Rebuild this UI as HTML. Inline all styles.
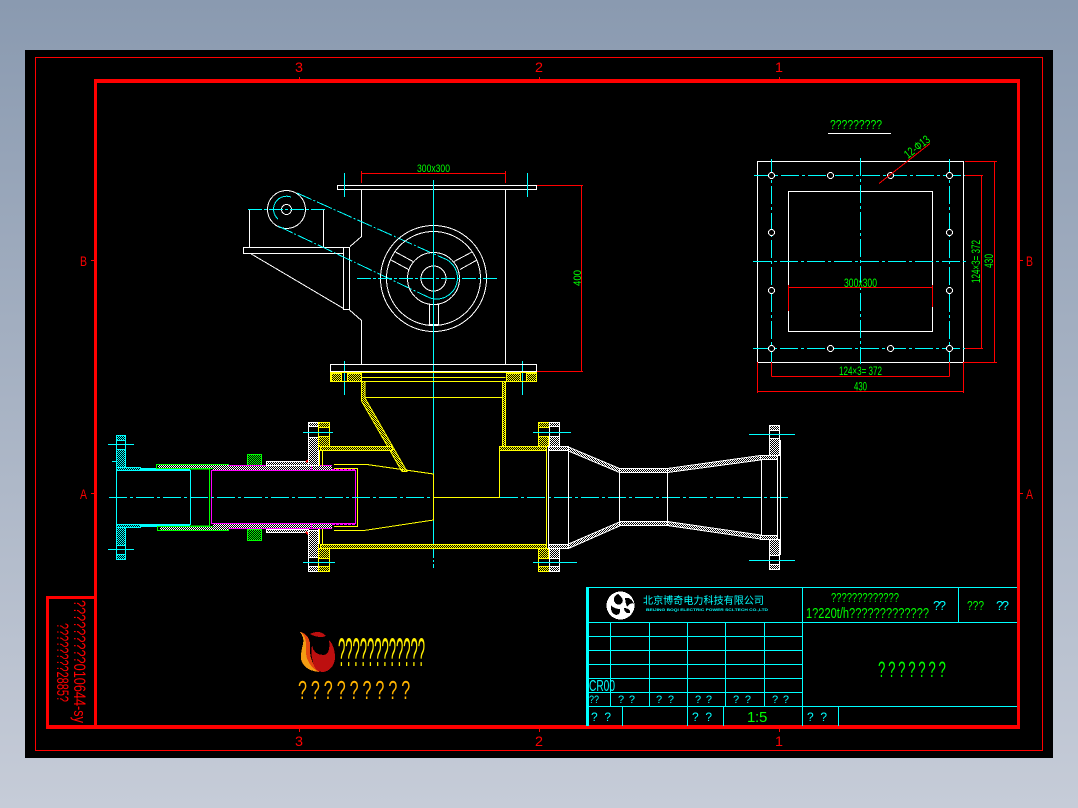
<!DOCTYPE html>
<html>
<head>
<meta charset="utf-8">
<style>
html,body{margin:0;padding:0;width:1078px;height:808px;overflow:hidden;background:linear-gradient(180deg,#8a9ab0 0%,#c6ccd8 100%)}
svg{position:absolute;left:0;top:0;display:block}
.s{shape-rendering:crispEdges;fill:none;stroke-width:1}
text{font-family:"Liberation Sans","Noto Sans CJK SC",sans-serif;text-anchor:start}
.w{stroke:#fff}.y{stroke:#ff0}.c{stroke:#0ff}.r{stroke:#f00}.g{stroke:#0f0}.m{stroke:#f0f}
.d{stroke-dasharray:14 2 3 2}
.gt{fill:#0f0}.ct{fill:#0ff}.rt{fill:#f00}
</style>
</head>
<body>
<svg width="1078" height="808" viewBox="0 0 1078 808" xmlns="http://www.w3.org/2000/svg">
<defs>
<pattern id="hw" width="2" height="2" patternUnits="userSpaceOnUse"><rect width="2" height="2" fill="#000"/><rect width="1" height="1" fill="#fff"/><rect x="1" y="1" width="1" height="1" fill="#fff"/></pattern>
<pattern id="hy" width="2" height="2" patternUnits="userSpaceOnUse"><rect width="2" height="2" fill="#000"/><rect width="1" height="1" fill="#ff0"/><rect x="1" y="1" width="1" height="1" fill="#ff0"/></pattern>
<pattern id="hc" width="2" height="2" patternUnits="userSpaceOnUse"><rect width="2" height="2" fill="#000"/><rect width="1" height="1" fill="#0ff"/><rect x="1" y="1" width="1" height="1" fill="#0ff"/></pattern>
<pattern id="hg" width="2" height="2" patternUnits="userSpaceOnUse"><rect width="2" height="2" fill="#000"/><rect width="1" height="1" fill="#0f0"/><rect x="1" y="1" width="1" height="1" fill="#0f0"/></pattern>
</defs>

<rect x="25" y="50" width="1028" height="708" fill="#000"/>

<g class="s">
<!-- frames -->
<rect class="r" x="35.5" y="57.5" width="1007" height="693"/>
<rect x="94" y="79" width="3" height="650" fill="#f00"/>
<rect x="94" y="79" width="926" height="4" fill="#f00"/>
<rect x="1017" y="79" width="3" height="650" fill="#f00"/>
<rect x="47" y="725" width="973" height="4" fill="#f00"/>
<rect x="46" y="597" width="3" height="132" fill="#f00"/>
<rect x="46" y="596" width="50" height="3" fill="#f00"/>
<path class="r" d="M299.5 77V79M539.5 77V79M779.5 77V79M299.5 729V732M539.5 729V732M779.5 729V732M91 260.5H94M91 493.5H94M1020 260.5H1023M1020 493.5H1023"/>

<!-- top view: flange + body -->
<rect class="w" x="337.5" y="185.5" width="199" height="4"/>
<path class="w" d="M361.5 189.5V236.5L350 246.5M505.5 189.5V364M349.5 310L361.5 320.5V364"/>
<rect class="w" x="343.5" y="247.5" width="6" height="62"/>
<rect class="w" x="243.5" y="247.5" width="100" height="6"/>
<path class="w" d="M250.5 253.5L343.5 308.5M249.5 209.5V247.5M323.5 209.5V247.5"/>
<circle class="w" cx="286.5" cy="209.5" r="19"/>
<circle class="w" cx="286.5" cy="209.5" r="5"/>
<path class="c" d="M291 197A13 13 0 0 0 278 219"/>
<path class="c d" d="M248 209.5H327"/>
<path class="c" stroke-dasharray="16 2 2 2" d="M297 193L443 258M278 226L430 298"/>
<circle class="w" cx="433.5" cy="278.5" r="53"/>
<circle class="w" cx="433.5" cy="278.5" r="47"/>
<circle class="w" cx="433.5" cy="278.5" r="26"/>
<circle class="w" cx="433.5" cy="278.5" r="12.5"/>
<path class="c" d="M443 258A21 21 0 0 1 430 298"/>
<path class="w" d="M395.5 252L413 261.5M391 260L408.5 269.5M472 252L454 261.5M477 260L460 269.5"/>
<rect class="w" x="429.5" y="304.5" width="9" height="20"/>
<path class="c d" d="M357 278.5H498"/>
<path class="c" d="M433.5 180V472"/>
<path class="c" stroke-dasharray="40 2 2 2" d="M433.5 472V568"/>
<path class="c" d="M344.5 173V197M527.5 173V197M344.5 361V395M522.5 361V395"/>
<path class="r" d="M361.5 171V183M505.5 171V183M361.5 173.5H505.5M537 185.5H583M537 371.5H583M581.5 185.5V371.5"/>
<rect class="w" x="330.5" y="364.5" width="206" height="7"/>

<!-- lower flange -->
<rect class="y" x="330.5" y="372.5" width="206" height="9"/>
<rect class="y" fill="url(#hy)" x="331.5" y="373.5" width="10" height="8"/>
<rect class="y" fill="url(#hy)" x="347.5" y="373.5" width="14" height="8"/>
<rect class="y" fill="url(#hy)" x="506.5" y="373.5" width="14" height="8"/>
<rect class="y" fill="url(#hy)" x="526.5" y="373.5" width="10" height="8"/>
<path class="y" d="M361.5 377.5H505.5M365 397.5H503"/>
<path class="y" fill="url(#hy)" d="M361.5 381.5H365V398L407 471.5H402L361.5 401Z"/>
<rect class="y" fill="url(#hy)" x="502.5" y="381.5" width="3" height="65"/>

<!-- left flange (cyan) -->
<path class="c" d="M116.5 467V435.5H125.5V467M116.5 527V559.5H125.5V527"/>
<rect class="c" fill="url(#hc)" x="116.5" y="435.5" width="9" height="5"/>
<rect class="c" fill="url(#hc)" x="116.5" y="449.5" width="9" height="18"/>
<rect class="c" fill="url(#hc)" x="116.5" y="526.5" width="9" height="19"/>
<rect class="c" fill="url(#hc)" x="116.5" y="554.5" width="9" height="5"/>
<path class="c" d="M108 444.5H134M108 549.5H134M112 461.5H117"/>
<rect class="c" x="116.5" y="470.5" width="74" height="54"/>
<rect class="c" fill="url(#hc)" x="116.5" y="467.5" width="24" height="3"/>
<rect class="c" fill="url(#hc)" x="116.5" y="524.5" width="24" height="3"/>
<path d="M140 469H190M140 526H190" stroke="#0ff" stroke-width="2"/>

<!-- green sleeve -->
<rect class="g" x="156.5" y="464.5" width="72" height="4"/>
<rect x="158" y="465" width="70" height="3" fill="url(#hw)"/>
<rect class="g" x="157.5" y="526.5" width="71" height="4"/>
<rect x="160" y="527" width="68" height="3" fill="url(#hw)"/>
<path class="g" d="M209.5 469V526M190 469H210M190 526H210"/>
<rect class="g" fill="url(#hg)" x="247.5" y="454.5" width="14" height="11"/>
<rect class="g" fill="url(#hg)" x="247.5" y="529.5" width="14" height="11"/>

<!-- magenta tube -->
<rect class="m" x="211.5" y="470.5" width="144" height="53"/>
<rect x="228" y="465" width="104" height="5" fill="url(#hw)"/>
<rect x="213" y="467" width="17" height="3" fill="url(#hw)"/>
<rect x="228" y="524" width="104" height="5" fill="url(#hw)"/>
<rect x="213" y="524" width="17" height="3" fill="url(#hw)"/>
<path class="m" d="M228 465.5H332M228 528.5H332M311.5 465V470M311.5 524V529"/>
<path class="m" stroke-dasharray="3 1" d="M332 469.5H356M332 524.5H356"/>
<rect class="w" fill="url(#hw)" x="266.5" y="461.5" width="42" height="4"/>
<rect class="w" fill="url(#hw)" x="266.5" y="529.5" width="42" height="3"/>
<path d="M306 462L309 460M306 532L309 535" stroke="#f00" stroke-width="2"/>

<!-- flange pair left -->
<path class="w" d="M308.5 465V422.5H318.5V465M308.5 529V571.5H318.5V529"/>
<rect class="w" fill="url(#hw)" x="308.5" y="422.5" width="10" height="4"/>
<rect class="w" fill="url(#hw)" x="308.5" y="437.5" width="10" height="28"/>
<rect class="w" fill="url(#hw)" x="308.5" y="530.5" width="10" height="27"/>
<rect class="w" fill="url(#hw)" x="308.5" y="566.5" width="10" height="5"/>
<path class="y" d="M318.5 450V422.5H329.5V446M318.5 544V571.5H329.5V548"/>
<rect class="y" fill="url(#hy)" x="318.5" y="422.5" width="11" height="5"/>
<rect class="y" fill="url(#hy)" x="318.5" y="436.5" width="11" height="10"/>
<rect class="y" fill="url(#hy)" x="318.5" y="548.5" width="11" height="10"/>
<rect class="y" fill="url(#hy)" x="318.5" y="566.5" width="11" height="5"/>
<path class="c" d="M303 432.5H333M303 562.5H335"/>

<!-- yellow pipe -->
<rect class="y" fill="url(#hy)" x="320.5" y="446.5" width="72" height="4"/>
<rect class="y" fill="url(#hy)" x="320.5" y="544.5" width="226" height="4"/>
<rect class="y" fill="url(#hy)" x="499.5" y="446.5" width="47" height="4"/>
<path class="y" d="M319.5 450V466M322.5 450V466M322.5 529V544M319.5 529V544"/>
<path class="y" d="M334 468.5H357.5V526.5H334"/>
<path class="y" d="M334 464.5H367L433.5 474V520L364 530.5H334M499.5 450V497.5H433.5M546.5 450V544"/>

<!-- center line -->
<path class="c" stroke-dasharray="18 3 3 3" d="M109 497.5H433"/>
<path class="c" stroke-dasharray="18 3 3 3" d="M500 497.5H790"/>

<!-- flange pair right -->
<path class="y" d="M538.5 446V422.5H549.5V446M538.5 548V571.5H549.5V548"/>
<rect class="y" fill="url(#hy)" x="538.5" y="422.5" width="11" height="5"/>
<rect class="y" fill="url(#hy)" x="538.5" y="436.5" width="10" height="10"/>
<rect class="y" fill="url(#hy)" x="538.5" y="548.5" width="10" height="10"/>
<rect class="y" fill="url(#hy)" x="538.5" y="566.5" width="11" height="5"/>
<path class="w" d="M549.5 446V422.5H559.5V446M549.5 548V571.5H559.5V548"/>
<rect class="w" fill="url(#hw)" x="549.5" y="422.5" width="10" height="4"/>
<rect class="w" fill="url(#hw)" x="549.5" y="436.5" width="10" height="10"/>
<rect class="w" fill="url(#hw)" x="549.5" y="548.5" width="10" height="10"/>
<rect class="w" fill="url(#hw)" x="549.5" y="566.5" width="10" height="5"/>
<path class="c" d="M533 432.5H571M533 562.5H577"/>

<!-- venturi -->
<rect class="w" fill="url(#hw)" x="548.5" y="446.5" width="20" height="4"/>
<rect class="w" fill="url(#hw)" x="548.5" y="544.5" width="20" height="4"/>
<path class="w" d="M548.5 450V544M568.5 450V544M619.5 472V522M667.5 472V522M761.5 460V535M777.5 460V535M780.5 440V555"/>
<path class="w" fill="url(#hw)" d="M568.5 447L619.5 468.5V472.5L568.5 451Z"/>
<path class="w" fill="url(#hw)" d="M568.5 544L619.5 522V526L568.5 548.5Z"/>
<rect class="w" fill="url(#hw)" x="619.5" y="468.5" width="48" height="4"/>
<rect class="w" fill="url(#hw)" x="619.5" y="521.5" width="48" height="4"/>
<path class="w" fill="url(#hw)" d="M667.5 468.5L760.5 455.5V460L667.5 472.5Z"/>
<path class="w" fill="url(#hw)" d="M667.5 521.5L760.5 535V539L667.5 525.5Z"/>
<rect class="w" fill="url(#hw)" x="760.5" y="455.5" width="17" height="4"/>
<rect class="w" fill="url(#hw)" x="760.5" y="535.5" width="17" height="4"/>
<rect class="w" fill="url(#hw)" x="769.5" y="425.5" width="10" height="5"/>
<rect class="w" fill="url(#hw)" x="769.5" y="438.5" width="10" height="17"/>
<rect class="w" fill="url(#hw)" x="769.5" y="539.5" width="10" height="16"/>
<rect class="w" fill="url(#hw)" x="769.5" y="564.5" width="10" height="5"/>
<path class="w" d="M769.5 430V439M779.5 430V439M769.5 555V565M779.5 555V565"/>
<path class="c" d="M749 434.5H795M749 560.5H795"/>

<!-- right plan view -->
<rect class="w" x="757.5" y="161.5" width="206" height="201"/>
<rect class="w" x="788.5" y="191.5" width="144" height="140"/>
<g class="c">
<path stroke-dasharray="18 3 3 3" d="M754 175.5H967M753 348.5H967M753 261.5H967M771.5 159V362M949.5 159V362M860.5 158V364"/>
</g>
<g class="w" fill="#000">
<circle cx="771.5" cy="175.5" r="3"/><circle cx="830.5" cy="175.5" r="3"/><circle cx="890.5" cy="175.5" r="3"/><circle cx="949.5" cy="175.5" r="3"/>
<circle cx="771.5" cy="232.5" r="3"/><circle cx="949.5" cy="232.5" r="3"/>
<circle cx="771.5" cy="290.5" r="3"/><circle cx="949.5" cy="290.5" r="3"/>
<circle cx="771.5" cy="348.5" r="3"/><circle cx="830.5" cy="348.5" r="3"/><circle cx="890.5" cy="348.5" r="3"/><circle cx="949.5" cy="348.5" r="3"/>
</g>
<path class="r" d="M788.5 287.5H932.5M788.5 285V311M932.5 285V307M879 183.5L930 143.5M965 161.5H997M994.5 161.5V362.5M963 362.5H997M965 175.5H983M981.5 175.5V348.5M965 348.5H983M771.5 362V376.5M949.5 362V376.5M771.5 376.5H949.5M757.5 362V393M963.5 362V393M757.5 391.5H963.5"/>
<path d="M828 133.5H891" class="w"/>

<!-- title block -->
<g class="c">
<path d="M587 587.5H1017M587 622.5H1017M587 636.5H802M587 650.5H802M587 664.5H802M587 678.5H802M587 692.5H802M587 706.5H1017"/>
<path d="M610.5 622V706M649.5 622V706M687.5 622V706M725.5 622V706M764.5 622V706M802.5 587V726M958.5 587V622M622.5 706V726M687.5 706V726M723.5 706V726M838.5 706V726"/>
</g>
<rect x="586" y="587" width="3" height="139" fill="#0ff"/>

<!-- company mark -->
<circle cx="620.5" cy="605.5" r="14" fill="#fff" stroke="none"/>
<path fill="#000" stroke="none" d="M618 594C622 597 624 600 622 603C620 606 616 605 614 601C613 598 615 595 618 594Z"/>
<path fill="#000" stroke="none" d="M625 598C629 597 633 600 634 604C632 602 629 604 627 607C626 604 625 601 625 598Z"/>
<path fill="#000" stroke="none" d="M611 605C613 608 617 609 620 609C621 612 619 615 616 615C612 614 610 610 611 605Z"/>
<path fill="#000" stroke="none" d="M624 608C628 608 631 610 630 613C627 614 624 612 624 608Z"/>

<!-- flame logo -->
<path fill="#f39c12" stroke="none" d="M300 632C306 633 309 640 308 647C306 655 311 666 319 672C307 671 300 664 301 655C301 646 307 641 300 632Z"/>
<path fill="#e4470f" stroke="none" d="M301 632C307 634 311 640 310 648C309 656 313 666 319 672C311 668 306 660 306 652C306 644 307 638 301 632Z"/>
<path fill="#bd0f0f" stroke="none" d="M312 645C313 652 317 655 324 655C329 654 330 648 329 640C333 644 335 650 335 657C335 666 329 672 322 672C317 672 314 668 313 662C311 656 311 650 312 645Z"/>
<path fill="#bd0f0f" stroke="none" d="M310 634C315 631 322 631 326 636C321 638 315 637 310 634Z"/>
</g>

<!-- red border labels -->
<g class="rt" font-size="14">
<text x="295" y="72" textLength="8" lengthAdjust="spacingAndGlyphs">3</text>
<text x="535" y="72" textLength="8" lengthAdjust="spacingAndGlyphs">2</text>
<text x="775" y="72" textLength="8" lengthAdjust="spacingAndGlyphs">1</text>
<text x="295" y="746" textLength="8" lengthAdjust="spacingAndGlyphs">3</text>
<text x="535" y="746" textLength="8" lengthAdjust="spacingAndGlyphs">2</text>
<text x="775" y="746" textLength="8" lengthAdjust="spacingAndGlyphs">1</text>
<text x="80" y="266" textLength="7" lengthAdjust="spacingAndGlyphs">B</text>
<text x="80" y="499" textLength="7" lengthAdjust="spacingAndGlyphs">A</text>
<text x="1026" y="266" textLength="7" lengthAdjust="spacingAndGlyphs">B</text>
<text x="1026" y="499" textLength="7" lengthAdjust="spacingAndGlyphs">A</text>
<text transform="translate(74,600) rotate(90)" font-size="17" textLength="123" lengthAdjust="spacingAndGlyphs">?????????010644-sy</text>
<text transform="translate(57,623) rotate(90)" font-size="17" textLength="79" lengthAdjust="spacingAndGlyphs">????????2885?</text>
</g>

<!-- green text -->
<g class="gt">
<text x="417" y="172" font-size="11" textLength="33" lengthAdjust="spacingAndGlyphs">300x300</text>
<text transform="translate(581,286) rotate(-90)" font-size="11" textLength="16" lengthAdjust="spacingAndGlyphs">400</text>
<text x="830" y="129" font-size="13" textLength="52" lengthAdjust="spacingAndGlyphs">?????????</text>
<text x="844" y="287" font-size="12" textLength="33" lengthAdjust="spacingAndGlyphs">300x300</text>
<text x="839" y="375" font-size="11.5" textLength="43" lengthAdjust="spacingAndGlyphs">124×3= 372</text>
<text x="854" y="390.5" font-size="12" textLength="13" lengthAdjust="spacingAndGlyphs">430</text>
<text transform="translate(980,283) rotate(-90)" font-size="11.5" textLength="43" lengthAdjust="spacingAndGlyphs">124×3= 372</text>
<text transform="translate(993,268) rotate(-90)" font-size="12" textLength="14" lengthAdjust="spacingAndGlyphs">430</text>
<text transform="translate(908,159) rotate(-38)" font-size="12" textLength="29" lengthAdjust="spacingAndGlyphs">12-Φ13</text>
<text x="831" y="602" font-size="12.5" textLength="68" lengthAdjust="spacingAndGlyphs">?????????????</text>
<text x="806" y="618" font-size="15" textLength="123" lengthAdjust="spacingAndGlyphs">1?220t/h?????????????</text>
<text x="967" y="610" font-size="13" textLength="17" lengthAdjust="spacingAndGlyphs">???</text>
<text transform="translate(878,677) scale(.6,1)" font-size="22" textLength="113" lengthAdjust="spacing">???????</text>
<text x="747 755 759" y="722" font-size="15">1:5</text>
</g>

<!-- cyan text -->
<g class="ct">
<text x="643" y="604" font-size="10" textLength="121" lengthAdjust="spacingAndGlyphs">北京博奇电力科技有限公司</text>
<text x="646" y="611" font-size="4" font-weight="bold" textLength="122" lengthAdjust="spacingAndGlyphs">BEIJING BOQI ELECTRIC POWER SCI-TECH CO.,LTD</text>
<text x="933" y="610" font-size="13" textLength="13" lengthAdjust="spacing">??</text>
<text x="996" y="610" font-size="13" textLength="13" lengthAdjust="spacing">??</text>
<text x="589" y="691" font-size="15.5" textLength="26" lengthAdjust="spacingAndGlyphs">CR00</text>
<text x="589" y="703" font-size="11" textLength="10" lengthAdjust="spacingAndGlyphs">??</text>
<text x="618" y="703" font-size="11" textLength="17" lengthAdjust="spacing">??</text>
<text x="656" y="703" font-size="11" textLength="18" lengthAdjust="spacing">??</text>
<text x="695" y="703" font-size="11" textLength="17" lengthAdjust="spacing">??</text>
<text x="733" y="703" font-size="11" textLength="18" lengthAdjust="spacing">??</text>
<text x="772" y="703" font-size="11" textLength="17" lengthAdjust="spacing">??</text>
<text x="591" y="721" font-size="12" textLength="20" lengthAdjust="spacing">??</text>
<text x="692" y="721" font-size="12" textLength="20" lengthAdjust="spacing">??</text>
<text x="807" y="721" font-size="12" textLength="20" lengthAdjust="spacing">??</text>
</g>

<!-- logo captions -->
<text x="338" y="666" font-size="40" fill="#ffee00" textLength="87" lengthAdjust="spacingAndGlyphs">????????????</text>
<text transform="translate(298,699) scale(.62,1)" font-size="26" fill="#ffb400" textLength="181" lengthAdjust="spacing">?????????</text>
</svg>
</body>
</html>
